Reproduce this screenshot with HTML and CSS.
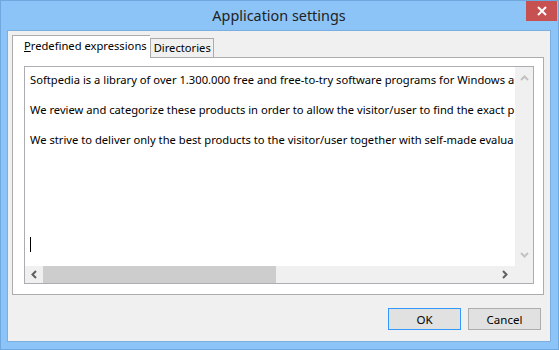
FILE: index.html
```html
<!DOCTYPE html>
<html lang="en">
    <head>
        <meta charset="UTF-8" />
        <meta name="viewport" content="width=device-width, initial-scale=1.0" />
        <title>Application settings</title>
        <link rel="stylesheet" href="styles.css">
    </head>
    <body>
        <div class="window">
            <header class="titlebar">
                <span class="title">Application settings</span>
                <button class="close" type="button">
                    <svg width="10" height="10" viewBox="0 0 10 10">
                        <path d="M1 1 L9 9 M9 1 L1 9" stroke="#fff" stroke-width="2"/>
                    </svg>
                </button>
            </header>
            <section class="client">
                <div class="tabs">
                    <div class="tab active"><u>P</u>redefined expressions</div>
                    <div class="tab">Directories</div>
                </div>
                <div class="panel">
                    <div class="textbox">
                        <div class="text">
                            <p>Softpedia is a library of over 1.300.000 free and free-to-try software programs for Windows a</p>
                            <p>&nbsp;</p>
                            <p>We review and categorize these products in order to allow the visitor/user to find the exact p</p>
                            <p>&nbsp;</p>
                            <p>We strive to deliver only the best products to the visitor/user together with self-made evalua</p>
                            <p>&nbsp;</p>
                            <p>&nbsp;</p>
                            <p>&nbsp;</p>
                            <p>&nbsp;</p>
                            <p>&nbsp;</p>
                            <p>&nbsp;</p>
                            <p><span class="caret"></span></p>
                        </div>
                        <div class="vscroll">
                            <svg width="9" height="6" viewBox="0 0 9 6"><path d="M1 5 L4.5 1.5 L8 5" fill="none" stroke="#c2c2c2" stroke-width="2"/></svg>
                            <svg width="9" height="6" viewBox="0 0 9 6"><path d="M1 1 L4.5 4.5 L8 1" fill="none" stroke="#c2c2c2" stroke-width="2"/></svg>
                        </div>
                        <div class="hscroll">
                            <span class="arrow">
                                <svg width="6" height="9" viewBox="0 0 6 9"><path d="M5 1 L1.5 4.5 L5 8" fill="none" stroke="#606060" stroke-width="2"/></svg>
                            </span>
                            <span class="thumb"></span>
                            <span class="arrow">
                                <svg width="6" height="9" viewBox="0 0 6 9"><path d="M1 1 L4.5 4.5 L1 8" fill="none" stroke="#606060" stroke-width="2"/></svg>
                            </span>
                        </div>
                        <div class="corner"></div>
                    </div>
                </div>
                <footer class="buttons">
                    <button class="btn default" type="button">OK</button>
                    <button class="btn" type="button">Cancel</button>
                </footer>
            </section>
        </div>
    </body>
</html>
```

FILE: styles.css
```css
* {
    box-sizing: border-box;
}
body {
    margin: 0;
    font: normal 11.2px "Noto Sans", "Liberation Sans", sans-serif;
    color: #000;
}
.window {
    width: 559px;
    height: 350px;
    background: #8cc4f7;
    border: 1px solid #6fa8de;
    display: flex;
    flex-direction: column;
    padding: 0 7px 7px 6px;
}
.titlebar {
    height: 29px;
    position: relative;
    display: flex;
    align-items: center;
    justify-content: center;
}
.title {
    font-size: 14.4px;
    color: #222;
    padding-bottom: 1px;
}
.close {
    position: absolute;
    right: -6px;
    top: 0;
    width: 31px;
    height: 20px;
    border: 0;
    background: #c75050;
    display: flex;
    align-items: center;
    justify-content: center;
    padding: 0;
}
.client {
    flex: 1;
    background: #f0f0f0;
    border: 1px solid #7aaee0;
    display: flex;
    flex-direction: column;
    padding: 4px 6px 11px 4px;
}
.tabs {
    display: flex;
    align-items: flex-end;
    height: 22px;
}
.tab {
    height: 19px;
    padding: 0 2px 0 3px;
    border: 1px solid #acacac;
    border-bottom: 0;
    background: #f0f0f0;
    line-height: 18px;
}
.tab.active {
    height: 23px;
    margin-bottom: -1px;
    padding: 0 3px 0 11px;
    background: #fff;
    border-right: 0;
    position: relative;
    line-height: 20px;
    z-index: 1;
}
.panel {
    flex: 1;
    background: #fff;
    border: 1px solid #acacac;
    padding: 8px 9px 10px 11px;
    display: flex;
}
.textbox {
    flex: 1;
    border: 1px solid #abadb3;
    display: grid;
    grid-template-columns: 1fr 18px;
    grid-template-rows: 1fr 17px;
    min-width: 0;
}
.text {
    overflow: hidden;
    padding: 5px 0 0 5px;
    white-space: nowrap;
    min-width: 0;
}
.text p {
    margin: 0;
    height: 15px;
    line-height: 15px;
}
.caret {
    display: inline-block;
    width: 1px;
    height: 15px;
    background: #000;
    vertical-align: top;
}
.vscroll {
    background: #f0f0f0;
    display: flex;
    flex-direction: column;
    justify-content: space-between;
    align-items: center;
    padding: 8px 0 8px;
}
.hscroll {
    background: #f0f0f0;
    display: flex;
    align-items: stretch;
}
.hscroll .arrow {
    width: 18px;
    display: flex;
    align-items: center;
    justify-content: center;
}
.hscroll .arrow:last-child {
    margin-left: auto;
    width: 20px;
}
.thumb {
    width: 233px;
    background: #cdcdcd;
}
.corner {
    background: #f0f0f0;
}
.buttons {
    display: flex;
    justify-content: flex-end;
    gap: 7px;
    margin-top: 13px;
    padding-right: 3px;
}
.btn {
    width: 73px;
    height: 22px;
    border: 1px solid #adadad;
    background: #e1e1e1;
    font: normal 11.5px "Noto Sans", "Liberation Sans", sans-serif;
    padding: 0;
}
.btn.default {
    border-color: #3399ff;
}
```
